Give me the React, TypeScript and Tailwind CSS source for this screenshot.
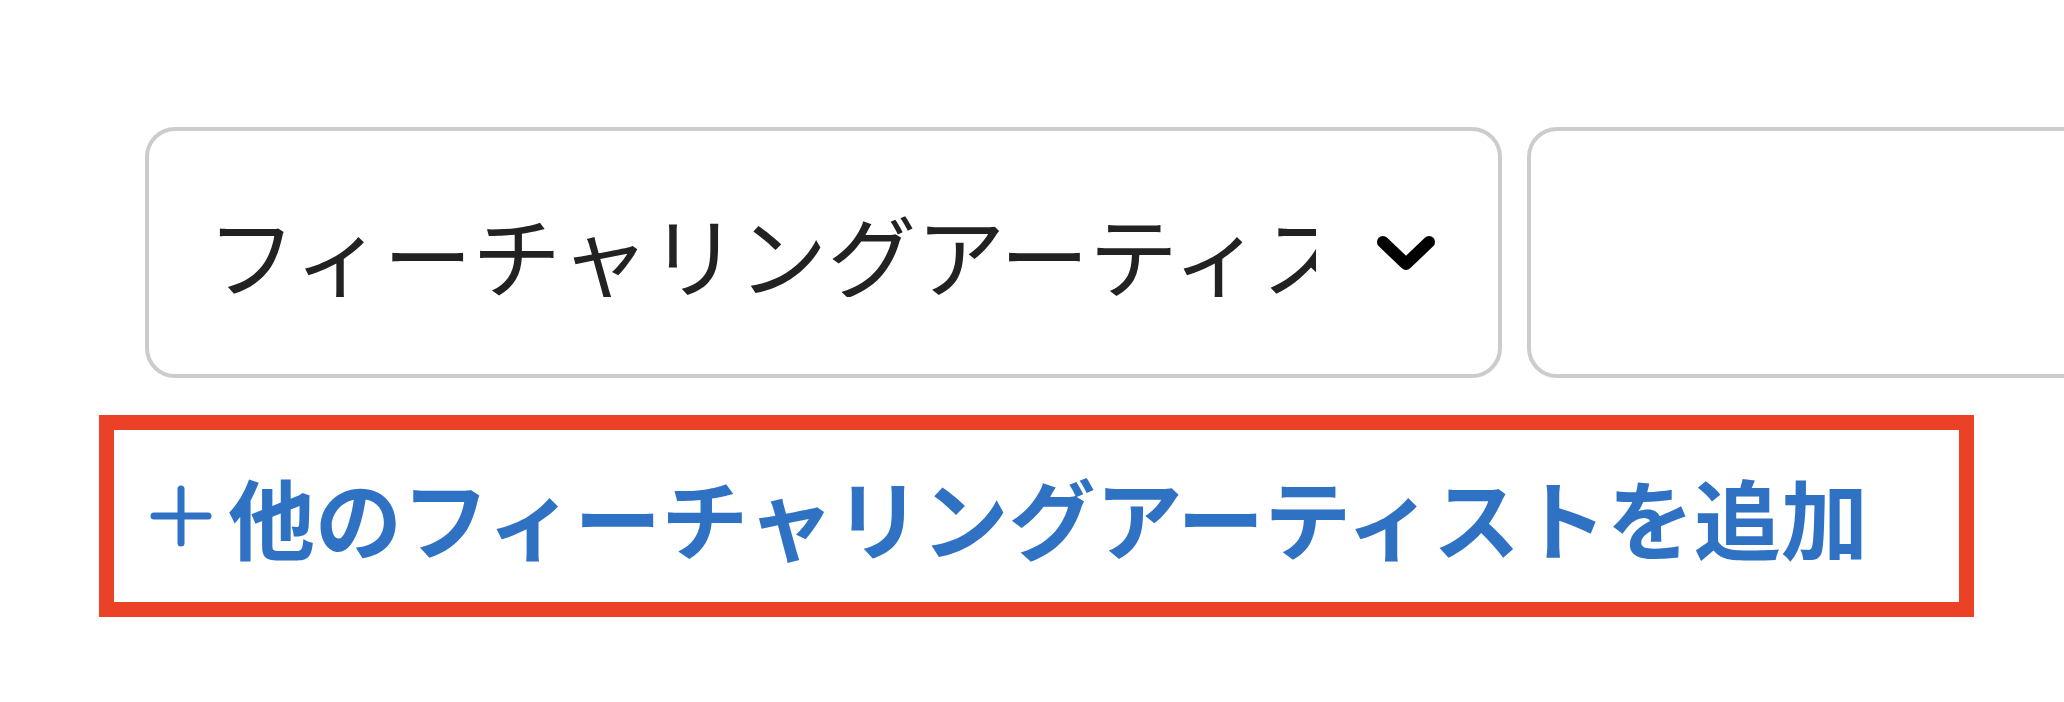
import React from 'react';

function ChevronDown() {
  return (
    <svg width="60" height="36" viewBox="0 0 60 36" className="shrink-0">
      <path
        d="M7 7 L30 29 L53 7"
        fill="none"
        stroke="#000"
        strokeWidth="12"
        strokeLinecap="round"
        strokeLinejoin="round"
      />
    </svg>
  );
}

function PlusIcon() {
  return (
    <svg width="62" height="62" viewBox="0 0 62 62" className="shrink-0">
      <path d="M31 4 V58 M4 31 H58" fill="none" stroke="#2f72c4" strokeWidth="7" strokeLinecap="round" />
    </svg>
  );
}

export default function App() {
  return (
    <div
      className="w-[2064px] h-[702px] bg-white overflow-hidden pt-[127px]"
      style={{ fontFamily: '"Noto Sans CJK JP", "Noto Sans", sans-serif' }}
    >
      <div className="flex gap-[25px] pl-[145px]">
        <div className="w-[1357px] h-[251px] shrink-0 border-4 border-[#cccccc] rounded-[30px] flex items-center pl-[58px] pr-[62px] gap-[60px]">
          <span className="flex-1 min-w-0 overflow-hidden whitespace-nowrap text-[89px] leading-none text-[#222222]">
            フィーチャリングアーティスト
          </span>
          <ChevronDown />
        </div>
        <div className="w-[700px] h-[251px] shrink-0 border-4 border-[#cccccc] rounded-[30px]" />
      </div>

      <div className="mt-[37px] ml-[99px] w-[1875px] h-[202px] border-[15px] border-[#eb4127] flex items-center pl-[36px] gap-[16px]">
        <PlusIcon />
        <span className="whitespace-nowrap text-[87px] font-bold leading-none text-[#2f72c4]">
          他のフィーチャリングアーティストを追加
        </span>
      </div>
    </div>
  );
}
